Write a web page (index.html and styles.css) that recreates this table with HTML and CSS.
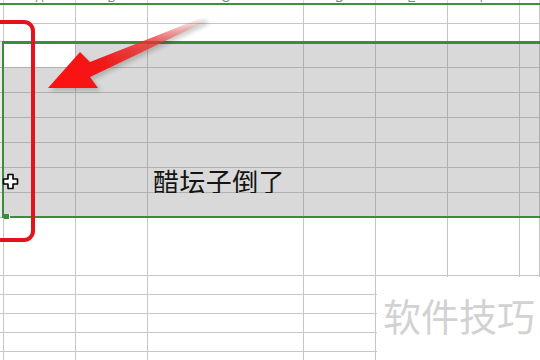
FILE: index.html
```html
<!DOCTYPE html>
<html lang="zh">
<head>
<meta charset="utf-8">
<title>Sheet</title>
<link rel="stylesheet" href="styles.css">
</head>
<body>
<div class="stage">
  <div class="sheet">
    <div class="row hdr">
      <div class="c c0"></div>
      <div class="c ca"><span>A</span></div>
      <div class="c cb"><span>B</span></div>
      <div class="c cc"><span>C</span></div>
      <div class="c cd"><span>D</span></div>
      <div class="c ce"><span>E</span></div>
      <div class="c cf"><span>F</span></div>
      <div class="c cg"></div>
    </div>
    <div class="row h19"><div class="c c0"></div><div class="c ca"></div><div class="c cb"></div><div class="c cc"></div><div class="c cd"></div><div class="c ce"></div><div class="c cf"></div><div class="c cg"></div></div>
    <div class="row h18"><div class="c c0"></div><div class="c ca"></div><div class="c cb"></div><div class="c cc"></div><div class="c cd"></div><div class="c ce"></div><div class="c cf"></div><div class="c cg"></div></div>
    <div class="row h26 sel"><div class="c c0"></div><div class="c ca active"></div><div class="c cb"></div><div class="c cc"></div><div class="c cd"></div><div class="c ce"></div><div class="c cf"></div><div class="c cg"></div></div>
    <div class="row h25 sel"><div class="c c0"></div><div class="c ca"></div><div class="c cb"></div><div class="c cc"></div><div class="c cd"></div><div class="c ce"></div><div class="c cf"></div><div class="c cg"></div></div>
    <div class="row h25 sel"><div class="c c0"></div><div class="c ca"></div><div class="c cb"></div><div class="c cc"></div><div class="c cd"></div><div class="c ce"></div><div class="c cf"></div><div class="c cg"></div></div>
    <div class="row h25 sel"><div class="c c0"></div><div class="c ca"></div><div class="c cb"></div><div class="c cc"></div><div class="c cd"></div><div class="c ce"></div><div class="c cf"></div><div class="c cg"></div></div>
    <div class="row h25 sel"><div class="c c0"></div><div class="c ca"></div><div class="c cb"></div><div class="c cc"></div><div class="c cd"></div><div class="c ce"></div><div class="c cf"></div><div class="c cg"></div></div>
    <div class="row h25 sel"><div class="c c0"></div><div class="c ca"></div><div class="c cb"></div><div class="c cc txt">醋坛子倒了</div><div class="c cd"></div><div class="c ce"></div><div class="c cf"></div><div class="c cg"></div></div>
    <div class="row h25 sel"><div class="c c0"></div><div class="c ca"></div><div class="c cb"></div><div class="c cc"></div><div class="c cd"></div><div class="c ce"></div><div class="c cf"></div><div class="c cg"></div></div>
    <div class="row h58"><div class="c c0"></div><div class="c ca"></div><div class="c cb"></div><div class="c cc"></div><div class="c cd"></div><div class="c ce"></div><div class="c cf"></div><div class="c cg"></div></div>
    <div class="row h19"><div class="c c0"></div><div class="c ca"></div><div class="c cb"></div><div class="c cc"></div><div class="c cd"></div><div class="c ce"></div><div class="c cf"></div><div class="c cg"></div></div>
    <div class="row h19"><div class="c c0"></div><div class="c ca"></div><div class="c cb"></div><div class="c cc"></div><div class="c cd"></div><div class="c ce"></div><div class="c cf"></div><div class="c cg"></div></div>
    <div class="row h19"><div class="c c0"></div><div class="c ca"></div><div class="c cb"></div><div class="c cc"></div><div class="c cd"></div><div class="c ce"></div><div class="c cf"></div><div class="c cg"></div></div>
    <div class="row h19"><div class="c c0"></div><div class="c ca"></div><div class="c cb"></div><div class="c cc"></div><div class="c cd"></div><div class="c ce"></div><div class="c cf"></div><div class="c cg"></div></div>
    <div class="row h19"><div class="c c0"></div><div class="c ca"></div><div class="c cb"></div><div class="c cc"></div><div class="c cd"></div><div class="c ce"></div><div class="c cf"></div><div class="c cg"></div></div>
  </div>

  <div class="selection"></div>
  <div class="handle"></div>

  <svg class="cursor" width="17" height="17" viewBox="0 0 17 17">
    <path d="M6 1.5 H11 V6 H15.5 V11 H11 V15.5 H6 V11 H1.5 V6 H6 Z" fill="#fff" stroke="#000" stroke-width="1.6" stroke-linejoin="round"/>
  </svg>

  <div class="bracket"></div>

  <svg class="arrow" width="230" height="110" viewBox="0 0 230 110">
    <defs>
      <linearGradient id="ag" x1="206" y1="18" x2="60" y2="85" gradientUnits="userSpaceOnUse">
        <stop offset="0" stop-color="#f06060" stop-opacity="0"/>
        <stop offset="0.35" stop-color="#ee3333" stop-opacity="0.75"/>
        <stop offset="0.7" stop-color="#f01818" stop-opacity="1"/>
        <stop offset="1" stop-color="#ff1010" stop-opacity="1"/>
      </linearGradient>
      <filter id="sh" x="-20%" y="-20%" width="140%" height="140%">
        <feGaussianBlur stdDeviation="2"/>
      </filter>
    </defs>
    <polygon points="50,91 82,55 92,65 206,20 209,24 93,80 101,91" fill="#000" opacity="0.18" filter="url(#sh)"/>
    <polygon points="48,88 80,52 90,62 204,17 207,21 90,77 98,88" fill="url(#ag)"/>
  </svg>

  <div class="watermark">软件技巧</div>
</div>
</body>
</html>
```

FILE: styles.css
```css
html, body {
  margin: 0;
  padding: 0;
  background: #fff;
}

.stage {
  position: relative;
  width: 540px;
  height: 360px;
  overflow: hidden;
  background: #fff;
  font-family: "Noto Sans CJK SC", "Noto Sans", sans-serif;
}

.sheet {
  display: flex;
  flex-direction: column;
}

.row {
  display: flex;
  box-sizing: border-box;
  border-bottom: 1px solid #c6c6c6;
  flex: none;
}

.c {
  box-sizing: border-box;
  border-right: 1px solid #c6c6c6;
  flex: none;
  height: 100%;
}

.c0 { width: 4px; }
.ca { width: 72px; }
.cb { width: 72px; }
.cc { width: 156px; }
.cd { width: 72px; }
.ce { width: 72px; }
.cf { width: 72px; }
.cg { flex: 1; }

.hdr {
  height: 5px;
  border-bottom: 2px solid #3f8f3f;
}

.hdr .c {
  border-right-color: #d6d6d6;
  display: flex;
  align-items: flex-end;
  justify-content: center;
  overflow: hidden;
}

.hdr span {
  font-family: "Liberation Sans", sans-serif;
  font-size: 12px;
  line-height: 9px;
  color: #6a9a6a;
}

.h18 { height: 18px; }
.h19 { height: 19px; }
.h25 { height: 25px; }
.h26 { height: 26px; }
.h58 { height: 58px; }

.sel {
  border-bottom-color: #b0b0b0;
}

.sel .c {
  background: #d9d9d9;
  border-right-color: #b0b0b0;
}

.sel .c0 {
  background: #ececec;
}

.sel .active {
  background: #fff;
}

.txt {
  padding-left: 5px;
  font-size: 26px;
  line-height: 25px;
  color: #141414;
  white-space: nowrap;
  overflow: visible;
  letter-spacing: 0.4px;
}

.selection {
  position: absolute;
  left: 2px;
  top: 41px;
  width: 560px;
  height: 177px;
  box-sizing: border-box;
  border-top: 3px solid #3c8c3c;
  border-left: 2px solid #3c8c3c;
  border-bottom: 2px solid #3c8c3c;
}

.handle {
  position: absolute;
  left: 4px;
  top: 214px;
  width: 5px;
  height: 5px;
  background: #3c8c3c;
  border-right: 1px solid #fff;
}

.cursor {
  position: absolute;
  left: 2px;
  top: 173px;
}

.bracket {
  position: absolute;
  left: -20px;
  top: 20px;
  width: 55px;
  height: 222px;
  box-sizing: border-box;
  border: 4px solid #e3121b;
  border-radius: 11px;
}

.arrow {
  position: absolute;
  left: 0;
  top: 0;
}

.watermark {
  position: absolute;
  left: 377px;
  top: 277px;
  width: 170px;
  height: 90px;
  background: #fff;
  box-sizing: border-box;
  padding: 14px 0 0 6px;
  font-size: 38px;
  line-height: 48px;
  color: #d2d2d2;
  letter-spacing: 0;
  white-space: nowrap;
}
```
